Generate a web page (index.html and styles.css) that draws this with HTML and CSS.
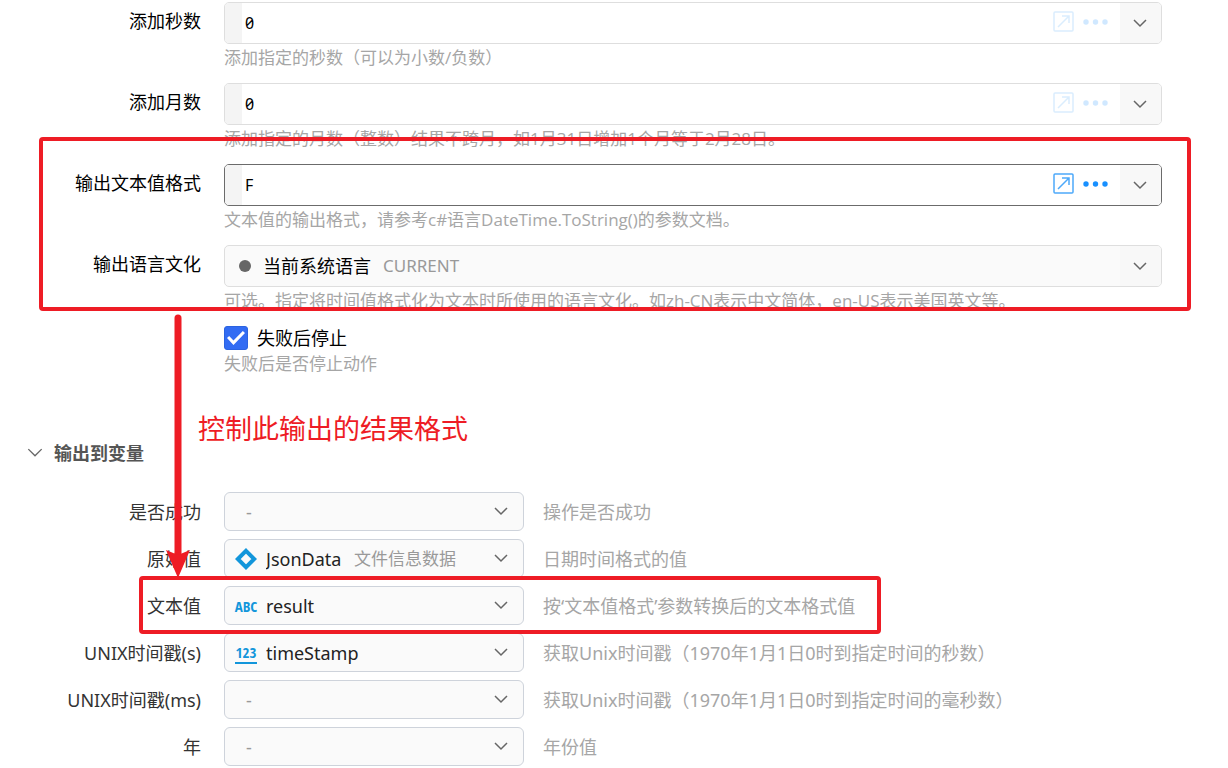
FILE: index.html
```html
<!DOCTYPE html>
<html lang="zh-CN">
<head>
<meta charset="utf-8">
<title>日期时间处理</title>
<link rel="stylesheet" href="styles.css">
</head>
<body>
<svg class="defs" aria-hidden="true">
  <symbol id="chevron" viewBox="0 0 14 9"><path d="M1 1l6 6 6-6"/></symbol>
  <symbol id="expand" viewBox="0 0 21 21"><rect x="1" y="1" width="19" height="19" rx="1"/><path d="M5 16L16 5M9 5h7v7"/></symbol>
  <symbol id="dots" viewBox="0 0 26 6"><circle cx="3" cy="3" r="2.7"/><circle cx="12.5" cy="3" r="2.7"/><circle cx="22" cy="3" r="2.7"/></symbol>
</svg>
<main class="page">
  <form class="params">
    <div class="row">
      <label class="label" for="seconds">添加秒数</label>
      <div class="control">
        <div class="field">
          <span class="gutter"></span>
          <input class="text" id="seconds" type="text" value="0">
          <button class="tool" type="button" aria-label="展开编辑"><svg class="expand"><use href="#expand"/></svg></button>
          <button class="tool" type="button" aria-label="更多"><svg class="dots"><use href="#dots"/></svg></button>
          <button class="drop" type="button" aria-label="选择"><svg class="chevron"><use href="#chevron"/></svg></button>
        </div>
        <p class="help">添加指定的秒数（可以为小数/负数）</p>
      </div>
    </div>
    <div class="row">
      <label class="label" for="months">添加月数</label>
      <div class="control">
        <div class="field">
          <span class="gutter"></span>
          <input class="text" id="months" type="text" value="0">
          <button class="tool" type="button" aria-label="展开编辑"><svg class="expand"><use href="#expand"/></svg></button>
          <button class="tool" type="button" aria-label="更多"><svg class="dots"><use href="#dots"/></svg></button>
          <button class="drop" type="button" aria-label="选择"><svg class="chevron"><use href="#chevron"/></svg></button>
        </div>
        <p class="help">添加指定的月数（整数）结果不跨月，如1月31日增加1个月等于2月28日。</p>
      </div>
    </div>
    <div class="marked marked-params">
      <div class="row">
        <label class="label" for="format">输出文本值格式</label>
        <div class="control">
          <div class="field field-active">
            <span class="gutter"></span>
            <input class="text" id="format" type="text" value="F">
            <button class="tool" type="button" aria-label="展开编辑"><svg class="expand"><use href="#expand"/></svg></button>
            <button class="tool" type="button" aria-label="更多"><svg class="dots"><use href="#dots"/></svg></button>
            <button class="drop" type="button" aria-label="选择"><svg class="chevron"><use href="#chevron"/></svg></button>
          </div>
          <p class="help">文本值的输出格式，请参考c#语言DateTime.ToString()的参数文档。</p>
        </div>
      </div>
      <div class="row">
        <label class="label" for="culture">输出语言文化</label>
        <div class="control">
          <div class="field field-select">
            <span class="bullet"></span>
            <select class="select" id="culture"><option>当前系统语言</option></select>
            <span class="note">CURRENT</span>
            <span class="drop"><svg class="chevron"><use href="#chevron"/></svg></span>
          </div>
          <p class="help">可选。指定将时间值格式化为文本时所使用的语言文化。如zh-CN表示中文简体，en-US表示美国英文等。</p>
        </div>
      </div>
    </div>
    <div class="row">
      <div class="control control-check">
        <label class="check"><input class="box" type="checkbox" checked>失败后停止</label>
        <p class="help">失败后是否停止动作</p>
      </div>
    </div>
  </form>

  <section class="outputs">
    <h2 class="title"><svg class="chevron chevron-title"><use href="#chevron"/></svg>输出到变量</h2>
    <div class="list">
      <div class="output">
        <label class="label" for="ok">是否成功</label>
        <div class="var"><span class="icon"></span><select class="select empty" id="ok"><option>-</option></select><svg class="chevron"><use href="#chevron"/></svg></div>
        <p class="desc">操作是否成功</p>
      </div>
      <div class="output">
        <label class="label" for="raw">原始值</label>
        <div class="var">
          <svg class="icon diamond" viewBox="0 0 22 22"><path d="M11 2.8L19.2 11 11 19.2 2.8 11z"/></svg>
          <select class="select" id="raw"><option>JsonData</option></select><span class="note">文件信息数据</span><svg class="chevron"><use href="#chevron"/></svg>
        </div>
        <p class="desc">日期时间格式的值</p>
      </div>
      <div class="output marked marked-output">
        <label class="label" for="txt">文本值</label>
        <div class="var"><span class="icon type">ABC</span><select class="select" id="txt"><option>result</option></select><svg class="chevron"><use href="#chevron"/></svg></div>
        <p class="desc">按‘文本值格式’参数转换后的文本格式值</p>
      </div>
      <div class="output">
        <label class="label" for="unixs">UNIX时间戳(s)</label>
        <div class="var"><span class="icon type type-number">123</span><select class="select" id="unixs"><option>timeStamp</option></select><svg class="chevron"><use href="#chevron"/></svg></div>
        <p class="desc">获取Unix时间戳（1970年1月1日0时到指定时间的秒数）</p>
      </div>
      <div class="output">
        <label class="label" for="unixms">UNIX时间戳(ms)</label>
        <div class="var"><span class="icon"></span><select class="select empty" id="unixms"><option>-</option></select><svg class="chevron"><use href="#chevron"/></svg></div>
        <p class="desc">获取Unix时间戳（1970年1月1日0时到指定时间的毫秒数）</p>
      </div>
      <div class="output">
        <label class="label" for="year">年</label>
        <div class="var"><span class="icon"></span><select class="select empty" id="year"><option>-</option></select><svg class="chevron"><use href="#chevron"/></svg></div>
        <p class="desc">年份值</p>
      </div>
    </div>
  </section>

  <svg class="arrow" viewBox="0 0 24 264" aria-hidden="true"><path class="shaft" d="M12 4v240"/><path class="head" d="M0 236l12 5 12-5-12 28z"/></svg>
  <p class="remark">控制此输出的结果格式</p>
</main>
</body>
</html>
```

FILE: styles.css
```css
*, *::before, *::after { box-sizing: border-box; }

body {
  margin: 0;
  background: #fff;
  color: #000;
  font: 18px/24px "Noto Sans", "Noto Sans CJK SC", sans-serif;
}

p, h2 { margin: 0; }
button, input, select { font: inherit; color: inherit; }

.defs { position: absolute; width: 0; height: 0; }
.page { position: relative; padding: 2px 0; }

.row {
  display: grid;
  grid-template-columns: 201px 1fr;
  column-gap: 23px;
  padding: 0 66px 11px 0;
}
.label { text-align: right; }
.row .label { line-height: 38px; }
.control { min-width: 0; }
.control-check { grid-column: 2; }

.field {
  display: flex;
  align-items: center;
  height: 42px;
  overflow: hidden;
  border: 1px solid #dedede;
  border-radius: 5px;
}
.field-active { border-color: #6b6b6b; }
.field-select { background: #fafafa; }
.gutter { width: 17px; height: 100%; background: #f4f4f4; }

.text {
  flex: 1;
  min-width: 0;
  padding: 0 3px;
  border: 0;
  outline: 0;
  background: none;
  font-size: 16px;
  font-variant-numeric: slashed-zero;
}

.tool {
  display: flex;
  margin-right: 9px;
  padding: 0 0 3px;
  border: 0;
  background: none;
  color: #1890ff;
  opacity: 0.2;
}
.field-active .tool { opacity: 1; }
.expand { width: 21px; height: 21px; fill: none; stroke: #4da9fa; stroke-width: 1.5; }
.dots { width: 26px; height: 6px; fill: currentColor; }

.drop {
  display: flex;
  align-items: center;
  justify-content: center;
  width: 41px;
  height: 100%;
  margin-left: 2px;
  padding: 0 2px 0 0;
  border: 0;
  background: #f8f8f8;
}
.chevron {
  flex: none;
  width: 14px;
  height: 9px;
  fill: none;
  stroke: #666;
  stroke-width: 1.5;
}

.bullet {
  width: 12px;
  height: 12px;
  margin: 0 12px 0 14px;
  border-radius: 50%;
  background: #666;
}
.select {
  appearance: none;
  padding: 0;
  border: 0;
  outline: 0;
  background: none;
}
.note { flex: 1; margin-left: 12px; color: #999; font-size: 17px; }

.help {
  color: #a6a6a6;
  font-family: "Open Sans", "Noto Sans CJK SC", sans-serif;
  font-size: 17px;
  line-height: 28px;
  white-space: nowrap;
}

.check { display: flex; align-items: center; gap: 9px; }
.box {
  appearance: none;
  display: grid;
  place-items: center;
  width: 24px;
  height: 24px;
  margin: 0;
  border: 1px solid #2b63e0;
  border-radius: 3px;
  background: #326cf3;
}
.box::before {
  content: "";
  width: 18px;
  height: 14px;
  background: #fff;
  clip-path: polygon(0 50%, 12% 36%, 36% 68%, 88% 0, 100% 14%, 36% 100%);
}

.title {
  display: flex;
  align-items: center;
  gap: 11px;
  margin-top: 52px;
  padding-left: 27px;
  color: #555;
  font-size: 18px;
  font-weight: 700;
}
.chevron-title { width: 16px; height: 10px; stroke-width: 1.2; }

.list { display: grid; gap: 8px; margin-top: 27px; color: #333; }
.output {
  display: grid;
  grid-template-columns: 201px 300px 1fr;
  column-gap: 23px;
  align-items: center;
}
.var {
  display: flex;
  align-items: center;
  height: 39px;
  padding: 0 15px 0 10px;
  border: 1px solid #ced3db;
  border-radius: 6px;
  background: #fafafa;
  color: #222;
}
.var .select { flex: 1; }
.var .select:has(+ .note) { flex: none; }
.var .select.empty { color: #999; }
.icon { flex: none; width: 22px; height: 22px; margin-right: 9px; }
.icon + .empty { margin-left: -20px; }
.diamond { fill: none; stroke: #1296db; stroke-width: 4; }
.type {
  display: flex;
  justify-content: center;
  color: #1296db;
  font: 700 15px/22px "Noto Sans ExtraCondensed", "Open Sans Condensed", "Liberation Sans Narrow", "Roboto Condensed", sans-serif;
}
.type-number { border-bottom: 2px solid #1296db; line-height: 20px; }
.desc { color: #a6a6a6; margin-left: -4px; white-space: nowrap; }

/* Red annotations lying over the form */
.marked { position: relative; }
.marked::after {
  content: "";
  position: absolute;
  border: 4px solid #ee1c25;
  border-radius: 4px;
  pointer-events: none;
}
.marked-params::after { inset: -27px 37px 15px 39px; }
.marked-output::after { top: -10px; bottom: -9px; left: 139px; width: 742px; }
.arrow { position: absolute; top: 314px; left: 166px; width: 24px; height: 264px; }
.shaft { fill: none; stroke: #ee1c25; stroke-width: 7; stroke-linecap: round; }
.head { fill: #ee1c25; }
.remark {
  position: absolute;
  top: 411px;
  left: 198px;
  color: #ee1c25;
  font-size: 27px;
  line-height: 36px;
}
```
